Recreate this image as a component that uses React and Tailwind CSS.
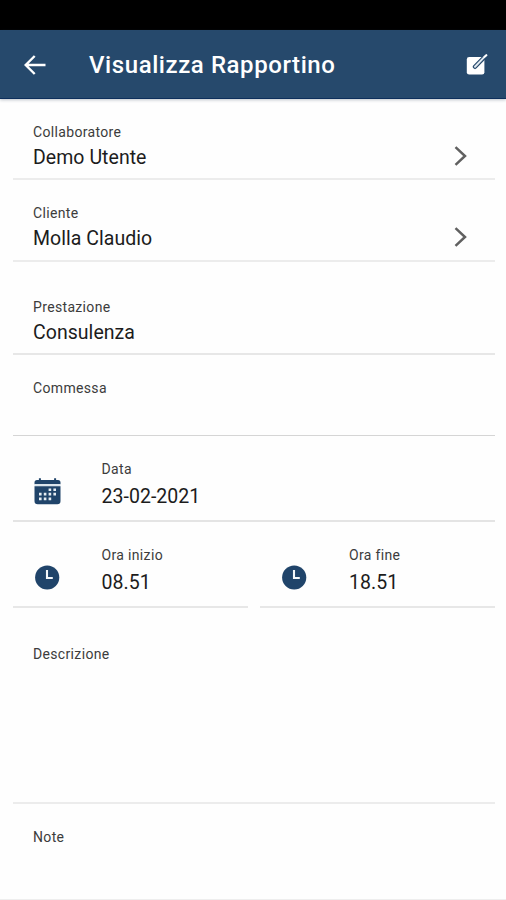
import React from "react";

function Label({ children, className = "" }) {
  return <div className={`h-4 w-max whitespace-nowrap text-[14px] leading-4 tracking-[0.34px] text-[#3c3c3c] ${className}`}>{children}</div>;
}

function Value({ children, className = "" }) {
  return <div className={`h-6 w-max whitespace-nowrap text-[19.5px] leading-6 tracking-[0.04px] text-[#1c1c1c] ${className}`}>{children}</div>;
}

function Chevron() {
  return (
    <svg className="h-5 w-3.5" viewBox="0 0 14 20" fill="none" stroke="#606060" strokeWidth="2.5">
      <path d="M1.5 1.2 L11 10 L1.5 18.8" />
    </svg>
  );
}

function Clock() {
  return (
    <svg className="h-[25px] w-[25px]" viewBox="0 0 25 25" fill="none">
      <circle cx="12.2" cy="12.5" r="12.1" fill="#20446a" />
      <path d="M12 5 V13 H17.8" stroke="#f4f8fb" strokeWidth="2.1" />
    </svg>
  );
}

function Calendar() {
  return (
    <svg className="h-[27px] w-[27px]" viewBox="0 0 27 27">
      <path d="M0.5 6.2 V4.5 Q0.5 2 3 2 H4.9 V0.3 H6.9 V2 H20.1 V0.3 H22.1 V2 H24 Q26.5 2 26.5 4.5 V6.2 Z" fill="#20446a" />
      <rect x="0.5" y="6" width="26" height="2.4" fill="#dce5ec" />
      <path d="M0.5 8.2 H26.5 V23 Q26.5 26.2 23.3 26.2 H3.7 Q0.5 26.2 0.5 23 Z" fill="#20446a" />
      <path
        fill="#e6edf3"
        d="M14.6 10.4h2.6v2.6h-2.6z M19.4 10.4h2.6v2.6h-2.6z M5 14.8h2.6v2.6H5z M9.8 14.8h2.6v2.6H9.8z M14.6 14.8h2.6v2.6h-2.6z M19.4 14.8h2.6v2.6h-2.6z M5 19.6h2.6v2.6H5z M9.8 19.6h2.6v2.6H9.8z M14.6 19.6h2.6v2.6h-2.6z"
      />
    </svg>
  );
}

function EditIcon() {
  return (
    <svg className="h-[22px] w-[22px]" viewBox="0 0 22 22">
      <rect x="0.8" y="3" width="17.6" height="17.6" rx="2.4" fill="#fff" />
      <path d="M9 12.8 L19.8 1.8" stroke="#26496c" strokeWidth="4.4" strokeLinecap="round" />
      <path d="M9 12.8 L18 3.4" stroke="#dfe7ee" strokeWidth="2" strokeLinecap="round" fill="none" />
      <path d="M18.6 2.8 L20.3 1.2" stroke="#fff" strokeWidth="2.2" strokeLinecap="round" />
    </svg>
  );
}

function TimeField({ label, value, textClass = "" }) {
  return (
    <div className="flex h-[86px] w-[235px] border-b-2 border-[#e7e7e7] pl-[22px]">
      <div className="w-[66px] pt-[43px]"><Clock /></div>
      <div className={`pt-[25px] ${textClass}`}>
        <Label>{label}</Label>
        <Value className="mt-[8px]">{value}</Value>
      </div>
    </div>
  );
}

export default function App() {
  return (
    <div className="h-[900px] w-[506px] overflow-hidden bg-[#fefefe] font-['Roboto',sans-serif]">
      <div className="h-[30px] bg-black" />
      <header className="flex h-[69px] items-center border-b border-[#0d2f5c] bg-[#26496c] pl-[24px] pr-[18px] pt-px shadow-[0_1px_3px_rgba(40,60,80,0.3)]">
        <svg className="h-[20px] w-[22px]" viewBox="0 0 22 20" fill="none" stroke="#fff" strokeWidth="2.4">
          <path d="M21.5 10 H1.8 M10.7 1 L1.7 10 L10.7 19" />
        </svg>
        <h1 className="ml-[43px] flex-1 whitespace-nowrap pt-px text-[24px] font-medium leading-7 tracking-[0.58px] text-white">Visualizza Rapportino</h1>
        <EditIcon />
      </header>
      <main className="pl-[13px] pr-[11px]">
        <section className="flex h-[81px] border-b-2 border-[#ececec] pl-5 pr-[27px]">
          <div className="flex-1 pt-[25px]">
            <Label>Collaboratore</Label>
            <Value className="mt-[6px]">Demo Utente</Value>
          </div>
          <div className="pt-[47px]"><Chevron /></div>
        </section>
        <section className="flex h-[82px] border-b-2 border-[#ececec] pl-5 pr-[27px]">
          <div className="flex-1 pt-[25px]">
            <Label>Cliente</Label>
            <Value className="mt-[6px]">Molla Claudio</Value>
          </div>
          <div className="pt-[47px]"><Chevron /></div>
        </section>
        <section className="h-[93px] border-b-2 border-[#e7e7e7] pl-5 pt-[37px]">
          <Label>Prestazione</Label>
          <Value className="mt-[6px]">Consulenza</Value>
        </section>
        <section className="h-[81px] border-b border-[#d5d5d5] pl-5 pt-[25px]">
          <Label>Commessa</Label>
        </section>
        <section className="flex h-[86px] border-b-2 border-[#e4e4e4] pl-5">
          <div className="w-[68px] pl-[0.5px] pt-[42px]"><Calendar /></div>
          <div className="pl-[0.5px] pt-[25px]">
            <Label>Data</Label>
            <Value className="mt-[8px]">23-02-2021</Value>
          </div>
        </section>
        <section className="flex justify-between">
          <TimeField label="Ora inizio" value="08.51" textClass="pl-[0.5px]" />
          <TimeField label="Ora fine" value="18.51" textClass="pl-px" />
        </section>
        <section className="h-[196px] border-b-2 border-[#ececec] pl-5 pt-[38px]">
          <Label>Descrizione</Label>
        </section>
        <section className="pl-5 pt-[25px]">
          <Label>Note</Label>
        </section>
      </main>
      <div className="mt-[54px] h-px bg-[#eeeeee]" />
    </div>
  );
}
